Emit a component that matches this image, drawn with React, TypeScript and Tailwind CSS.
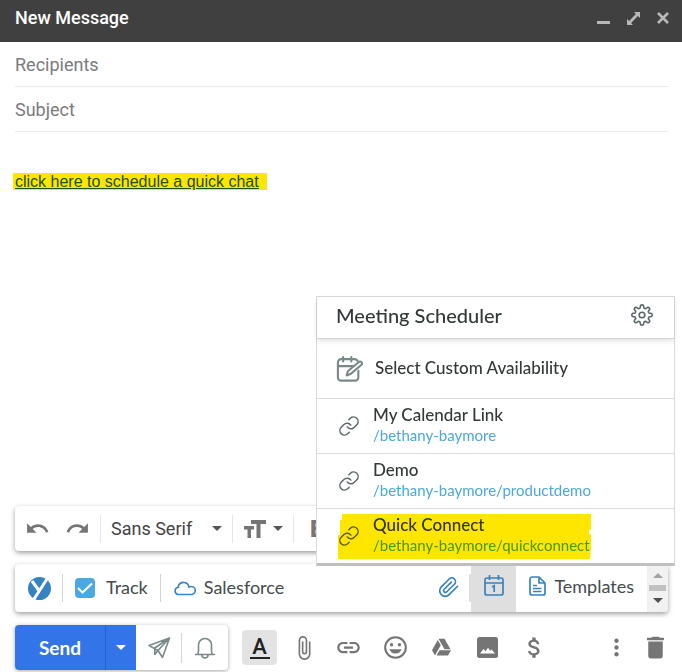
import React from "react";
import { MdUndo, MdRedo, MdAttachFile, MdInsertLink, MdAttachMoney, MdMoreVert, MdDelete } from "react-icons/md";

const roboto = "font-['Roboto','Liberation_Sans',sans-serif]";
const lato = "font-['Lato','Liberation_Sans',sans-serif]";

function Svg({ size = 24, className = "", children }: { size?: number; className?: string; children: React.ReactNode }) {
  return (
    <svg
      width={size}
      height={size}
      viewBox="0 0 24 24"
      fill="none"
      stroke="currentColor"
      strokeWidth={1.6}
      strokeLinecap="round"
      strokeLinejoin="round"
      aria-hidden="true"
      className={`shrink-0 ${className}`}
    >
      {children}
    </svg>
  );
}

function Caret({ className = "" }: { className?: string }) {
  return (
    <svg width="10" height="5" viewBox="0 0 10 5" aria-hidden="true" className={`shrink-0 ${className}`}>
      <path d="M0 0h10L5 5z" fill="currentColor" />
    </svg>
  );
}

function gearPath() {
  const points: string[] = [];
  for (let i = 0; i < 160; i++) {
    const a = (i / 160) * Math.PI * 2;
    const r = 8.6 + 1.5 * Math.tanh(2 * Math.cos(8 * a)) / Math.tanh(2);
    points.push(`${(12 + r * Math.cos(a)).toFixed(2)} ${(12 + r * Math.sin(a)).toFixed(2)}`);
  }
  return `M${points.join("L")}Z`;
}

function ChainIcon() {
  return (
    <Svg size={22} className="text-[#5a6668]">
      <path d="M10 13a5 5 0 0 0 7.54.54l3-3a5 5 0 0 0-7.07-7.07l-1.72 1.71" />
      <path d="M14 11a5 5 0 0 0-7.54-.54l-3 3a5 5 0 0 0 7.07 7.07l1.71-1.71" />
    </Svg>
  );
}

const links = [
  { title: "My Calendar Link", path: "/bethany-baymore", marked: false },
  { title: "Demo", path: "/bethany-baymore/productdemo", marked: false },
  { title: "Quick Connect", path: "/bethany-baymore/quickconnect", marked: true },
];

function MeetingMenu() {
  return (
    <section
      aria-label="Meeting Scheduler"
      className={`absolute -right-[7px] bottom-full z-10 -mb-0.5 w-[359px] border border-b-[3px] border-[#d9dcdc] border-b-[#bfbfbf] bg-white text-[#333838] ${lato}`}
    >
      <header className="flex h-[42px] items-center justify-between border-b border-[#cfd5d6] pr-5 pl-[19px] shadow-[0_2px_5px_rgba(0,0,0,0.12)]">
        <h2 className="pb-1.5 text-[20px] leading-6 font-medium">Meeting Scheduler</h2>
        <button type="button" aria-label="Settings" className="mb-1.5 text-[#5a6668]">
          <Svg>
            <path d={gearPath()} />
            <circle cx="12" cy="12" r="2.8" />
          </Svg>
        </button>
      </header>
      <button type="button" className="flex h-[60px] w-full items-center gap-3 border-b border-[#d9dcdc] pl-[18px] text-left">
        <Svg size={28} className="text-[#7b8889]">
          <path d="M20 13.500v5.700a2.800 2.800 0 0 1-2.800 2.800H5.300a2.800 2.800 0 0 1-2.800-2.800V6.300a2.800 2.800 0 0 1 2.800-2.800h11.400a3 3 0 0 1 2.600 1.500M2.500 9.500h13M7 1.800v3.700M14 1.800v3.700" strokeWidth="1.8" />
          <path d="M10 17.500l1.200-3.800 9-7.500a1.600 1.600 0 0 1 2.500 2.200l-9 7.600z" strokeWidth="1.8" />
        </Svg>
        <span className="pb-0.5 text-[17px] leading-6 font-medium">Select Custom Availability</span>
      </button>
      <ul>
        {links.map((link) => (
          <li key={link.path} className="relative border-b border-[#d9dcdc] last:border-b-0">
            <button type="button" className="flex h-[54px] w-full items-center gap-[13px] pl-[21px] text-left">
              <ChainIcon />
              <span className="flex flex-col pb-0.5">
                <span className="text-[17px] leading-5 font-medium">{link.title}</span>
                <span className="text-[15px] leading-5 text-[#4aa9de]">{link.path}</span>
              </span>
            </button>
            {link.marked && (
              <svg
                width="253"
                height="45"
                viewBox="0 0 253 45"
                aria-hidden="true"
                className="pointer-events-none absolute top-[5px] left-[21px] mix-blend-multiply"
              >
                <path d="M4 0h249v15l-2 2v3h2v14l-1 11H0V21h2V6h2z" fill="#ffe600" />
              </svg>
            )}
          </li>
        ))}
      </ul>
    </section>
  );
}

function FormatBar() {
  return (
    <div className="flex h-[45px] items-center overflow-hidden rounded-sm bg-white pl-2.5 text-[#757575] shadow-[0_2px_5px_rgba(0,0,0,0.38)]">
      <button type="button" aria-label="Undo" className="w-10"><MdUndo size={25} /></button>
      <button type="button" aria-label="Redo" className="w-[35px]"><MdRedo size={25} /></button>
      <div className="flex h-7 items-center border-l border-[#e3e6e8] pl-2.5">
        <select aria-label="Font" className={`w-[101px] appearance-none bg-transparent text-[18px] leading-6 text-[#444] ${roboto}`}>
          <option>Sans Serif</option>
        </select>
        <Caret className="mr-2.5 text-[#555]" />
      </div>
      <button type="button" aria-label="Size" className="flex h-7 items-center gap-1.5 border-x border-[#e3e6e8] px-2.5">
        <svg width="24" height="20" viewBox="0 0 24 20" fill="currentColor" aria-hidden="true">
          <path d="M8 1h15v4h-5.500v14h-4V5H8zM1 7h10v3.500H8V19H4.500v-8.500H1z" />
        </svg>
        <Caret className="text-[#555]" />
      </button>
      <button type="button" aria-label="Bold" className={`ml-4 text-[24px] leading-7 font-black ${roboto}`}>B</button>
    </div>
  );
}

function ExtensionBar() {
  return (
    <div className={`relative text-[#444b4c] ${lato}`}>
      <MeetingMenu />
      <div className="flex h-12 items-center overflow-hidden rounded-sm bg-white text-[18px] leading-6 shadow-[0_2px_5px_rgba(0,0,0,0.38)]">
        <button type="button" aria-label="Yesware" className="ml-[13px]">
          <svg width="23" height="23" viewBox="0 0 23 23" aria-hidden="true">
            <circle cx="11.500" cy="11.500" r="11.500" fill="#3583c0" />
            <path d="M4 4l6.500 9M19 2L6 22" fill="none" stroke="#fff" strokeWidth="3" />
          </svg>
        </button>
        <div className="ml-[11px] flex h-7 items-center border-x border-[#d3d6d8] px-3">
          <label className="flex items-center gap-[11px]">
            <span className="grid size-5 place-items-center">
              <input type="checkbox" defaultChecked className="col-start-1 row-start-1 size-5 appearance-none rounded-sm bg-[#4aa9e3]" />
              <svg width="18" height="18" viewBox="0 0 18 18" fill="none" stroke="#fff" strokeWidth="2" className="pointer-events-none z-[1] col-start-1 row-start-1" aria-hidden="true">
                <path d="M2 9l4.500 4.500L16 4.500" />
              </svg>
            </span>
            <span className="pb-0.5">Track</span>
          </label>
        </div>
        <button type="button" className="ml-3 flex items-center gap-2">
          <svg width="23" height="18" viewBox="0 0 23 18" fill="none" stroke="#3583c0" strokeWidth="1.6" aria-hidden="true">
            <path d="M5 15.500h13a4 4 0 0 0 .500-8 3.500 3.500 0 0 0-2.500.500A5.600 5.600 0 0 0 5.500 6.500c-.3.700-.2 1.200-.1 1.700A3.700 3.700 0 0 0 5 15.500z" />
          </svg>
          <span className="pb-0.5">Salesforce</span>
        </button>
        <div className="ml-auto flex h-full items-center">
          <button type="button" aria-label="Attachments" className="mr-2.5 text-[#3583c0]">
            <Svg size={22}>
              <path d="m21.400 11.100-9.200 9.200a6 6 0 0 1-8.500-8.500l8.600-8.600a4 4 0 0 1 5.700 5.700l-8.600 8.500a2 2 0 0 1-2.800-2.800l8-8" strokeWidth="1.8" transform="translate(1 -1)" />
            </Svg>
          </button>
          <span className="h-7 w-0.5 bg-[#dde0e2]" />
          <button type="button" aria-label="Meetings" className="grid h-full w-[45px] place-items-center bg-[#dfdfdf] pb-1 text-[#3583c0]">
            <svg width="20" height="22" viewBox="0 0 20 22" fill="none" stroke="currentColor" strokeWidth="1.700" aria-hidden="true">
              <rect x="1" y="3" width="18" height="17" rx="2" />
              <path d="M1 8h18M5.500 0v5M14.500 0v5M8 12l2.200-1.200V17" />
            </svg>
          </button>
          <button type="button" className="flex items-center gap-2 px-[13px] pb-1">
            <svg width="17" height="20" viewBox="0 0 17 20" fill="none" stroke="#3583c0" strokeWidth="1.700" aria-hidden="true">
              <path d="M3 1h7l6 6v10a2 2 0 0 1-2 2H3a2 2 0 0 1-2-2V3a2 2 0 0 1 2-2zM10 1v6h6M4 9.500h4M4 12.500h8.500M4 15.500h8.500" />
            </svg>
            Templates
          </button>
          <div className="flex h-full w-[21px] flex-col items-center justify-center gap-[7px] bg-[#f1f1f1]">
            <Caret className="rotate-180 text-[#a3a3a3]" />
            <span className="h-1.5 w-[17px] bg-[#c1c1c1]" />
            <Caret className="text-[#505050]" />
          </div>
        </div>
      </div>
    </div>
  );
}

function SendBar() {
  return (
    <div className="flex h-[45px] items-center text-[#757575]">
      <div className="flex h-full items-center rounded-sm bg-white text-[#7b8889] shadow-[0_1px_4px_rgba(0,0,0,0.35)]">
        <button type="button" className={`h-full w-[90px] rounded-l-sm bg-[#3374e8] text-[19px] leading-6 font-bold text-white ${lato}`}>Send</button>
        <button type="button" aria-label="Send options" className="grid h-full w-[31px] place-items-center border-l border-[#2860c8] bg-[#3374e8] text-white">
          <Caret />
        </button>
        <button type="button" aria-label="Send later" className="flex h-[30px] w-[46px] items-center justify-center border-r border-[#d3d6d8]">
          <Svg>
            <path d="M2 9.500 22.500 2 15.500 21.500l-4.500-7zM22.500 2 7.800 12v6.500l3.200-4zM22.500 2 11 14.500" />
          </Svg>
        </button>
        <button type="button" aria-label="Reminder" className="flex w-[46px] justify-center">
          <Svg>
            <path d="M2.500 18.500h19M4.500 18.500c.8-1 1-2 1-4V9a6.500 6.500 0 0 1 13 0v5.500c0 2 .2 3 1 4M9 19a3 3 0 0 0 6 0" />
          </Svg>
        </button>
      </div>
      <button type="button" aria-label="Formatting" className="ml-3.5 flex size-[35px] shrink-0 flex-col items-center justify-center rounded-sm bg-[#e3e3e3] text-[#222]">
        <span aria-hidden="true" className={`text-[22px] leading-5 font-medium ${roboto}`}>A</span>
        <span className="h-0.5 w-5 bg-current" />
      </button>
      <div className="ml-3.5 flex items-center">
        <button type="button" aria-label="Attach" className="grid w-[23px] place-items-center"><MdAttachFile size={26} /></button>
        <button type="button" aria-label="Insert link" className="ml-[21px]"><MdInsertLink size={27} /></button>
        <button type="button" aria-label="Emoji" className="ml-5">
          <svg width="27" height="27" viewBox="0 0 24 24" fill="currentColor" aria-hidden="true">
            <circle cx="12" cy="12" r="9.200" fill="none" stroke="currentColor" strokeWidth="1.800" />
            <circle cx="8.500" cy="9.500" r="1.500" />
            <circle cx="15.500" cy="9.500" r="1.500" />
            <path d="M6.500 13.500h11a5.900 5.900 0 0 1-11 0z" />
          </svg>
        </button>
        <button type="button" aria-label="Drive" className="ml-[22px]">
          <svg width="21" height="21" viewBox="0 0 24 24" fill="currentColor" aria-hidden="true">
            <path d="M7.710 3.500 1.150 15l3.430 6 6.550-11.500zM9.730 15 6.300 21h13.120l3.430-6zM22.280 14 15.420 2H8.580l6.840 12z" />
          </svg>
        </button>
        <button type="button" aria-label="Photo" className="ml-[25px]">
          <svg width="21" height="21" viewBox="0 0 21 21" aria-hidden="true">
            <rect width="21" height="21" rx="2.500" fill="currentColor" />
            <path d="M3 16.500l3.500-4.500 2 2.200 2.500-3.500 2.200 3 1.300-1.200 3.500 4z" fill="#fff" />
          </svg>
        </button>
        <button type="button" aria-label="Send money" className="ml-[23px]"><MdAttachMoney size={27} /></button>
      </div>
      <button type="button" aria-label="More" className="ml-auto"><MdMoreVert size={27} /></button>
      <button type="button" aria-label="Discard" className="-mr-0.5 ml-[11px]"><MdDelete size={29} /></button>
    </div>
  );
}

export default function App() {
  return (
    <main className={`flex min-h-screen flex-col bg-white ${roboto}`}>
      <header className="flex h-[42px] items-center bg-[#404040] pr-[13px] pl-[15px] text-[#b8b8b8]">
        <h1 className="pb-1.5 text-[18px] leading-6 font-medium text-white">New Message</h1>
        <div className="ml-auto flex items-center gap-[17px] pb-1.5">
          <button type="button" aria-label="Minimize" className="flex h-3 items-end"><span className="h-[3px] w-[13px] bg-current" /></button>
          <button type="button" aria-label="Full screen">
            <svg width="13" height="13" viewBox="0 0 13 13" fill="currentColor" aria-hidden="true">
              <path d="M7 0h6v6l-2.100-1.900-6.800 6.800L6 13H0V7l2.100 1.900 6.800-6.800z" />
            </svg>
          </button>
          <button type="button" aria-label="Close">
            <svg width="12" height="12" viewBox="0 0 12 12" stroke="currentColor" strokeWidth="2.600" aria-hidden="true">
              <path d="M1 1l10 10M11 1L1 11" />
            </svg>
          </button>
        </div>
      </header>
      <div className="flex grow flex-col pr-3.5 pl-[15px]">
        <input aria-label="Recipients" placeholder="Recipients" className="h-[45px] border-b border-[#e6ebeb] text-[18px] leading-6 outline-none placeholder:text-[#7b7b7b]" />
        <input aria-label="Subject" placeholder="Subject" className="h-[45px] border-b border-[#e6ebeb] text-[18px] leading-6 outline-none placeholder:text-[#7b7b7b]" />
        <div className="grow pt-10 font-['Liberation_Sans',Arial,sans-serif] text-[16px] leading-5">
          <a href="#schedule" className="-ml-0.5 bg-[#ffe600] pr-2 pl-0.5 text-[#1b5000] underline">click here to schedule a quick chat</a>
        </div>
        <div className="flex flex-col gap-[13px] pb-0.5">
          <FormatBar />
          <ExtensionBar />
          <SendBar />
        </div>
      </div>
    </main>
  );
}
